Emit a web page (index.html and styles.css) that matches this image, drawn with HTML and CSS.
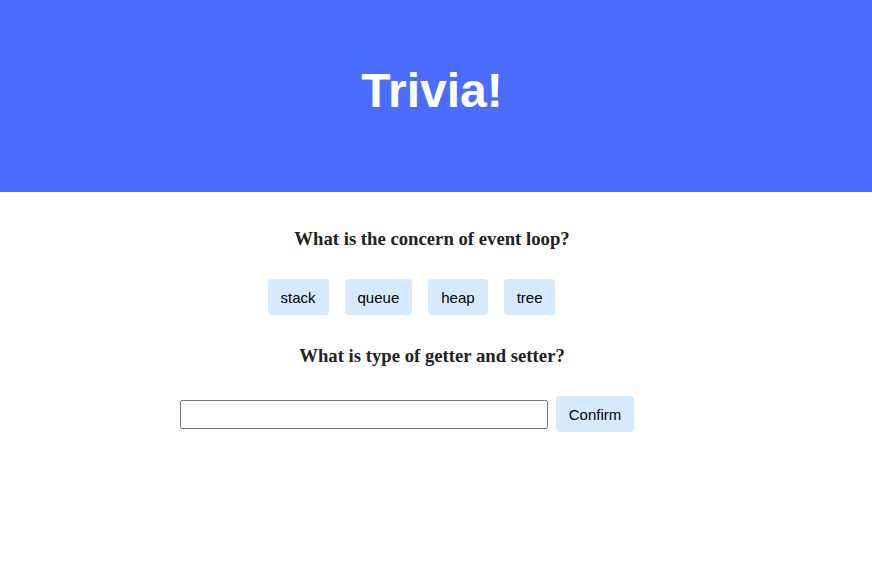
FILE: index.html
```html
<!DOCTYPE html>
<html>
<head>
<meta charset="utf-8">
<link rel="stylesheet" href="styles.css">
</head>
<body>
<header class="hero">
  <h1 class="hero-title">Trivia!</h1>
</header>
<main class="quiz">
  <section class="question">
    <h3 class="question-text">What is the concern of event loop?</h3>
    <div class="options">
      <button class="btn">stack</button>
      <button class="btn">queue</button>
      <button class="btn">heap</button>
      <button class="btn">tree</button>
    </div>
  </section>
  <section class="question">
    <h3 class="question-text">What is type of getter and setter?</h3>
    <div class="answer-row">
      <input class="answer-input" type="text">
      <button class="btn">Confirm</button>
    </div>
  </section>
</main>
</body>
</html>
```

FILE: styles.css
```css
html, body {
  margin: 0;
  padding: 0;
  background: #ffffff;
}

.hero {
  box-sizing: border-box;
  height: 192px;
  background: #4a6cff;
  padding: 67px 8px 0 0;
}

.hero-title {
  margin: 0;
  text-align: center;
  color: #ffffff;
  font-family: "Liberation Sans", Arial, sans-serif;
  font-weight: bold;
  font-size: 48px;
  line-height: 48px;
}

.quiz {
  padding: 36px 8px 0 0;
  display: flex;
  flex-direction: column;
  gap: 30px;
}

.question {
  display: flex;
  flex-direction: column;
  align-items: center;
  gap: 30px;
}

.question-text {
  margin: 0;
  font-family: "Liberation Serif", "Times New Roman", serif;
  font-weight: bold;
  font-size: 18.72px;
  line-height: 21px;
  color: #222222;
}

.options {
  display: flex;
  gap: 16px;
  padding-right: 41px;
}

.answer-row {
  display: flex;
  align-items: center;
  gap: 8px;
  padding-right: 50px;
}

.btn {
  box-sizing: border-box;
  height: 36px;
  padding: 0 13px;
  border: none;
  border-radius: 4px;
  background: #d6eaff;
  color: #000000;
  font-family: "Liberation Sans", Arial, sans-serif;
  font-size: 15px;
  line-height: 35px;
  cursor: pointer;
}

.answer-input {
  box-sizing: border-box;
  width: 368px;
  height: 29px;
  margin: 0;
  border: 1px solid #767676;
  border-radius: 2px;
  padding: 2px 4px;
  font-family: "Liberation Sans", Arial, sans-serif;
  font-size: 15px;
}
```
